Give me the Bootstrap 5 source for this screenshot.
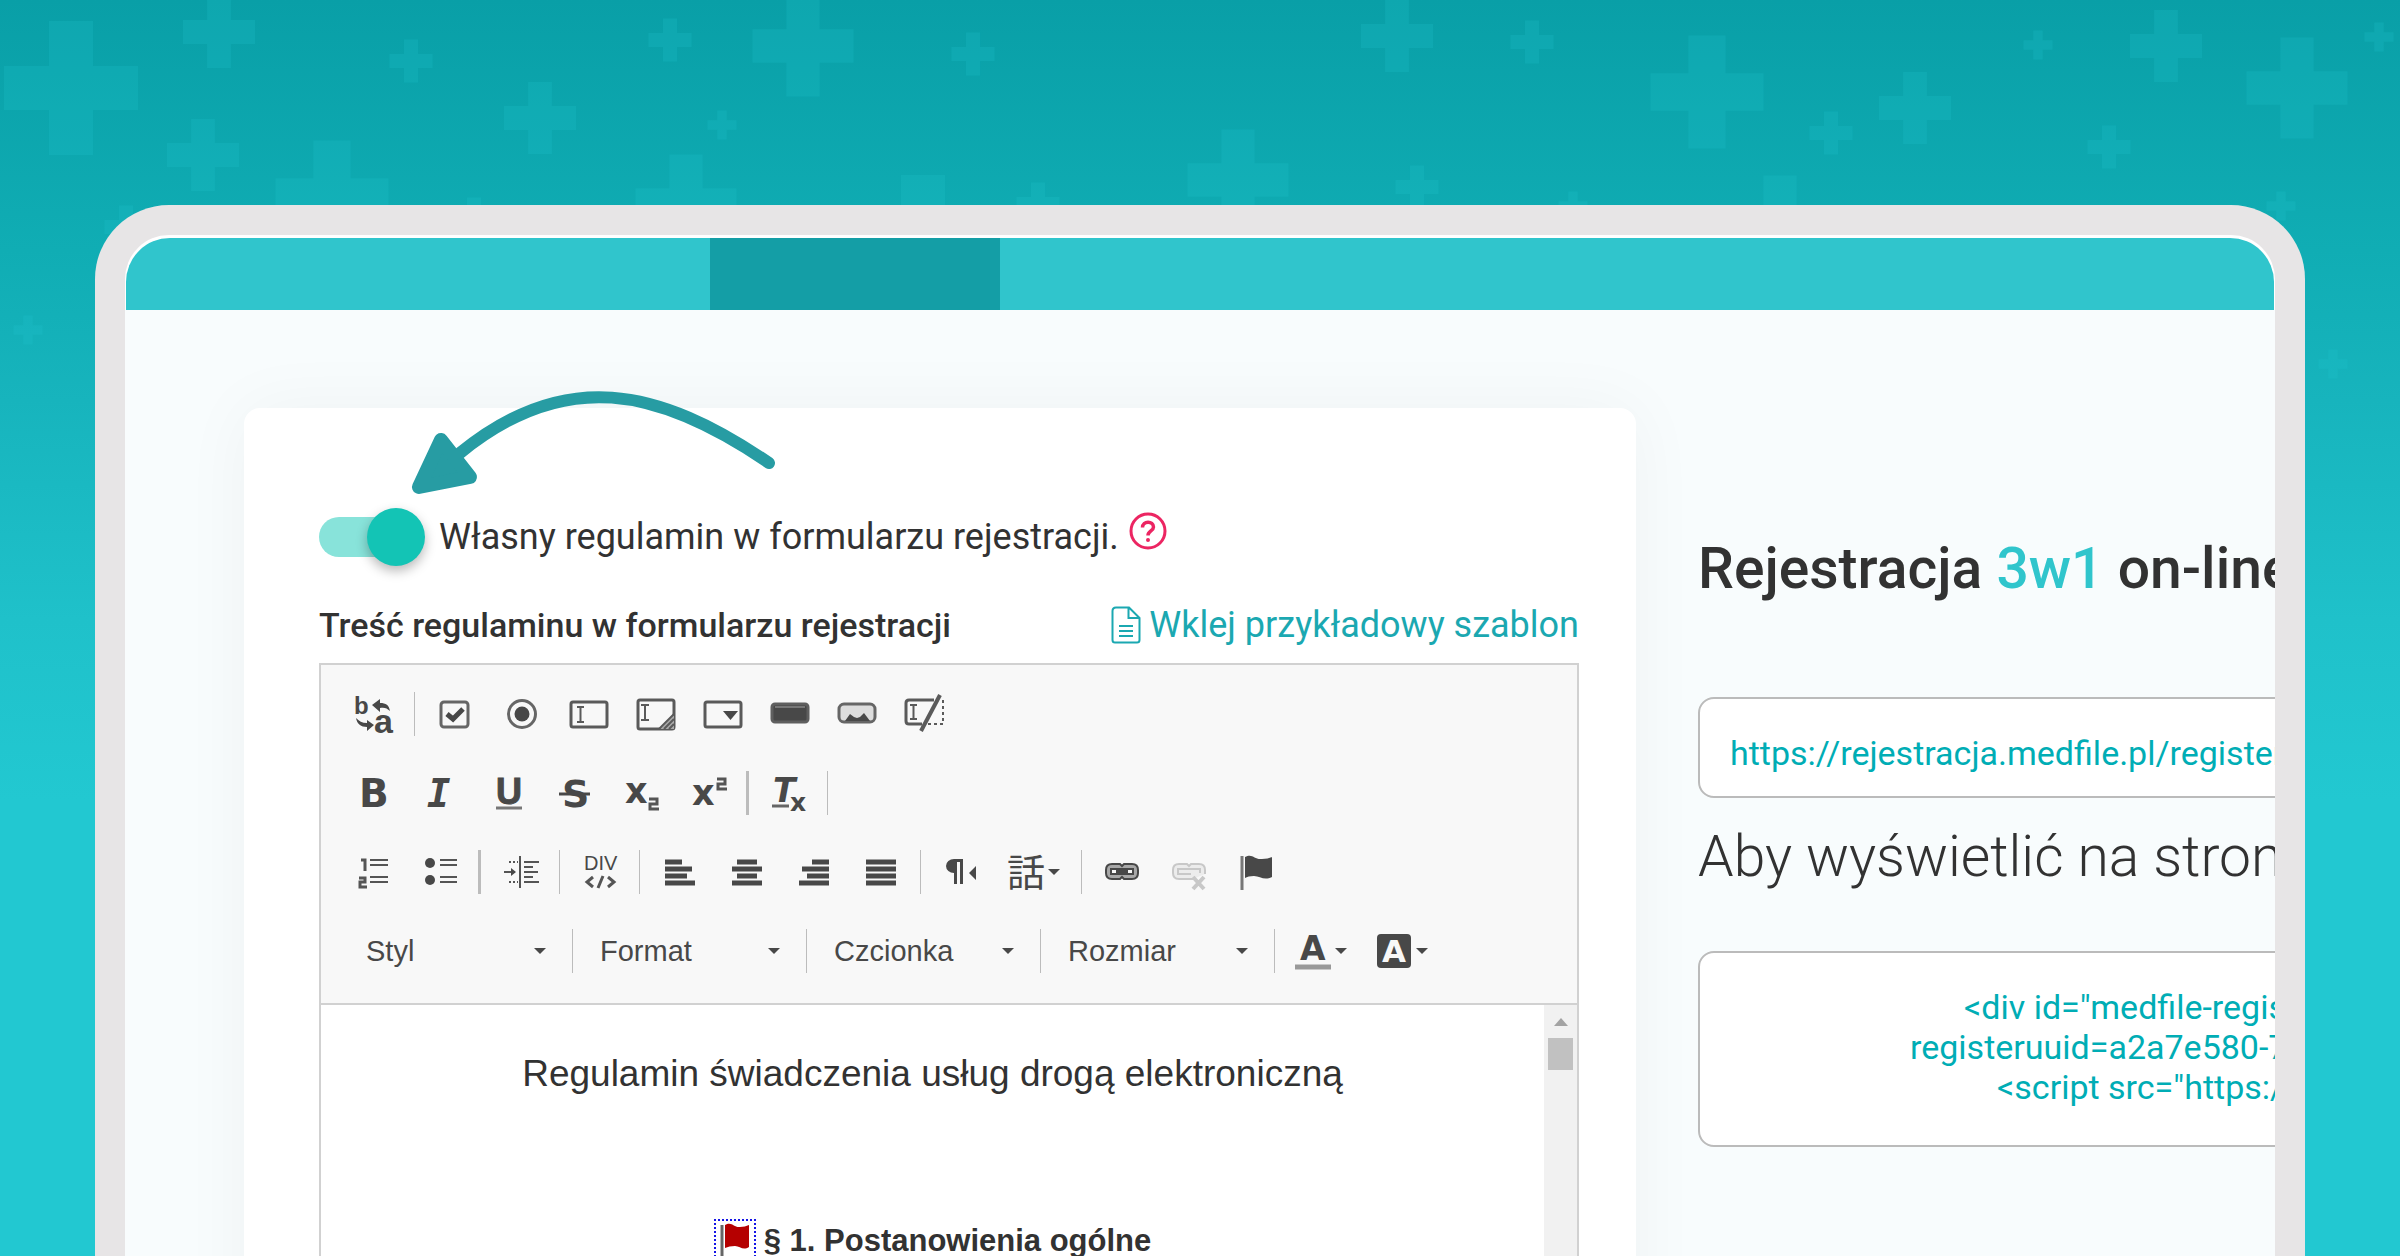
<!DOCTYPE html>
<html lang="pl">
<head>
<meta charset="utf-8">
<meta name="viewport" content="width=device-width, initial-scale=1">
<title>Rejestracja 3w1 on-line</title>
<link href="https://cdn.jsdelivr.net/npm/bootstrap@5.3.0/dist/css/bootstrap.min.css" rel="stylesheet">
<style>
  body { font-family: Roboto, "Liberation Sans", sans-serif; color: #323232; }
  .scene { padding: 205px 95px 0; background: linear-gradient(#099fa7 0, #10adb4 250px, #17b4bd 400px, #1fc1ca 620px, #22c8d1 800px); }
  .plus-pattern { left: 0; top: 0; width: 100%; pointer-events: none; fill: #22c8d0; fill-opacity: .2; }
  .device { border: 30px solid #e7e5e6; border-bottom: 0; border-radius: 74px 74px 0 0; background: #fff; padding: 3px 1px 0; }
  .topbar { height: 72px; background: #30c5cc; border-radius: 44px 44px 0 0; padding-left: 584px; }
  .topbar-active { width: 290px; background: #149ea6; }
  .screen { margin: 0 -1px; padding: 98px 0 0 119px; gap: 62px; background: #f8fcfd; }
  .panel { border: 0; border-radius: 16px; padding: 100px 57px 0 75px; box-shadow: 0 0 70px rgba(0, 40, 50, .045); }
  .hint-arrow { left: 160px; top: -28px; }
  .switch-row { height: 58px; gap: 14px; font-size: 36px; }
  .toggle { appearance: none; position: relative; width: 106px; height: 40px; margin: 0; border-radius: 20px; background: linear-gradient(90deg, #88e3da 80px, transparent 80px); }
  .toggle::before { content: ""; position: absolute; right: 0; top: -9px; width: 58px; height: 58px; border-radius: 50%; background: #13c4b5; box-shadow: 0 5px 12px rgba(0, 0, 0, .28); }
  .help { margin: 0 0 12px -4px; line-height: 0; }
  .title-row { height: 40px; margin: 39px 0 18px; font-size: 36px; line-height: 40px; white-space: nowrap; }
  .title-text { font-size: 34px; font-weight: 500; }
  .title-row a { color: #1ba8b1; gap: 8px; }
  .editor { border: 2px solid #d1d1d1; border-bottom: 0; background: #fff; }
  .tools { padding: 27px 18px 30px; gap: 35px; background: #f8f8f8; border-bottom: 2px solid #d1d1d1; }
  .tool-line { height: 44px; }
  .tool-combos { padding-left: 6px; }
  .tool { flex: none; width: 67px; height: 44px; padding: 0; border: 0; background: none; display: flex; align-items: center; justify-content: center; color: #484848; }
  .tool svg { display: block; flex: none; overflow: visible; }
  .pole { display: block; }
  .tool-wide { width: 69px; }
  .tool-menu { width: 81px; justify-content: flex-start; padding-left: 12px; gap: 2px; }
  .split { flex: none; width: 1px; height: 44px; margin: 0 6px; background: #bcbcbc; }
  .split-bold { width: 3px; margin: 0 5px; }
  .tool-line text { font-family: "Liberation Sans", sans-serif; font-weight: 700; fill: #484848; }
  .tool-line text.heavy { font-family: "DejaVu Sans", sans-serif; }
  .tool-line text.mono { font-family: "DejaVu Sans Mono", monospace; }
  .tool-line text.cjk { font-family: "Noto Sans CJK JP", sans-serif; font-weight: 400; }
  .tool-line text.thin { font-weight: 400; }
  .tool-line text.knockout { fill: #f8f8f8; }
  .combo { flex: none; appearance: none; width: 221px; height: 44px; border: 0; padding: 0 40px 0 21px; color: #484848; font: 29px "Liberation Sans", sans-serif;
    background: transparent url("data:image/svg+xml,%3Csvg xmlns='http://www.w3.org/2000/svg' viewBox='0 0 12 6'%3E%3Cpath d='M0 0h12L6 6z' fill='%23484848'/%3E%3C/svg%3E") no-repeat right 20px center / 12px 6px; }
  .doc { padding-top: 47px; font-family: "Liberation Sans", sans-serif; }
  .doc-title { font-size: 37px; line-height: 44px; margin: 0 0 123px; }
  .doc-section { font-size: 31px; line-height: 44px; gap: 8px; margin: 0 0 80px; }
  .anchor-mark { width: 42px; height: 42px; border: 2px dotted #1414e6; }
  .scroller { width: 33px; background: #f1f1f1; gap: 12px; padding-top: 13px; }
  .scroller-thumb { width: 25px; height: 32px; background: #c1c1c1; }
  .side { flex: 0 0 577px; min-width: 0; padding-top: 129px; }
  .side h1, .side h2 { font-size: 57px; line-height: 64px; white-space: nowrap; }
  .side h1 { font-weight: 500; margin: 0 0 96px; }
  .side h2 { font-weight: 300; margin: 27px 0 62px; }
  .aqua { color: #30c5cc; }
  .field { display: block; width: 900px; border: 2px solid #bbb; border-radius: 16px; background: #fff; color: #00adb5; font-size: 34px; line-height: 40px; }
  .field-url { height: 101px; padding: 10px 30px 0; }
  .field-code { height: 196px; padding: 34px 0 0 210px; white-space: pre; font-family: inherit; }
  .line-a { padding-left: 54px; }
  .line-b { padding-left: 87px; }
</style>
<script src="https://cdn.jsdelivr.net/npm/bootstrap@5.3.0/dist/js/bootstrap.bundle.min.js"></script>
</head>
<body>
<div class="scene vh-100 overflow-hidden position-relative d-flex flex-column">
  <svg class="plus-pattern position-absolute" viewBox="0 0 2400 400" aria-hidden="true">
    <defs><path id="p" d="M-.165-.5h.33v.335H.5v.33H.165V.5h-.33V.165H-.5v-.33h.335z"/></defs>
    <use href="#p" transform="translate(71 88) scale(134)"/><use href="#p" transform="translate(923 242) scale(134)"/>
    <use href="#p" transform="translate(332 197) scale(113)"/><use href="#p" transform="translate(1707 92) scale(113)"/>
    <use href="#p" transform="translate(803 46) scale(101)"/><use href="#p" transform="translate(686 205) scale(101)"/>
    <use href="#p" transform="translate(1238 180) scale(101)"/><use href="#p" transform="translate(2297 88) scale(101)"/>
    <use href="#p" transform="translate(1780 226) scale(101)"/>
    <use href="#p" transform="translate(219 32) scale(72)"/><use href="#p" transform="translate(540 118) scale(72)"/>
    <use href="#p" transform="translate(203 155) scale(72)"/><use href="#p" transform="translate(1397 36) scale(72)"/>
    <use href="#p" transform="translate(1915 108) scale(72)"/><use href="#p" transform="translate(2166 46) scale(72)"/>
    <use href="#p" transform="translate(411 61) scale(43)"/><use href="#p" transform="translate(670 40) scale(43)"/>
    <use href="#p" transform="translate(973 54) scale(43)"/><use href="#p" transform="translate(474 219) scale(43)"/>
    <use href="#p" transform="translate(1038 204) scale(43)"/><use href="#p" transform="translate(126 227) scale(43)"/>
    <use href="#p" transform="translate(1532 42) scale(43)"/><use href="#p" transform="translate(1831 133) scale(43)"/>
    <use href="#p" transform="translate(2109 147) scale(43)"/><use href="#p" transform="translate(1417 187) scale(43)"/>
    <use href="#p" transform="translate(722 125) scale(29)"/><use href="#p" transform="translate(28 330) scale(29)"/>
    <use href="#p" transform="translate(2038 45) scale(29)"/><use href="#p" transform="translate(2379 37) scale(29)"/>
    <use href="#p" transform="translate(1573 206) scale(29)"/><use href="#p" transform="translate(2281 206) scale(29)"/>
    <use href="#p" transform="translate(2333 364) scale(29)"/>
  </svg>

  <div class="device flex-grow-1 overflow-hidden position-relative d-flex flex-column">
    <header class="topbar d-flex flex-shrink-0 overflow-hidden"><div class="topbar-active"></div></header>

    <main class="screen d-flex flex-grow-1">
      <section class="panel card flex-grow-1">
        <svg class="hint-arrow position-absolute" width="380" height="120" viewBox="0 0 380 120" aria-hidden="true">
          <path d="M365 83C254 7 160-12 56 73" fill="none" stroke="#279ca3" stroke-width="12" stroke-linecap="round"/>
          <path d="M37 60L15 107L66 97Z" fill="#279ca3" stroke="#279ca3" stroke-width="14" stroke-linejoin="round"/>
        </svg>

        <div class="switch-row d-flex align-items-center">
          <input class="toggle flex-shrink-0" type="checkbox" role="switch" id="ownRules" checked>
          <label for="ownRules">Własny regulamin w formularzu rejestracji.</label>
          <a class="help" href="#" aria-label="Pomoc">
            <svg width="38" height="38" viewBox="0 0 38 38" fill="none" stroke="#ec2562" stroke-width="3"><circle cx="19" cy="19" r="17"/><path d="M13.500 15.500c0-7 11-7 11-.5 0 4-5.500 4-5.500 8.500" stroke-width="3.500"/><circle cx="19" cy="28" r="1" fill="#ec2562" stroke-width="2"/></svg>
          </a>
        </div>

        <div class="title-row d-flex justify-content-between">
          <span class="title-text">Treść regulaminu w formularzu rejestracji</span>
          <a href="#" class="text-decoration-none d-flex align-items-center">
            <svg width="30" height="38" viewBox="0 0 30 38" fill="none" stroke="#1ba8b1" stroke-width="2"><path d="M5 1.500h13L28.500 12v22q0 2.500-2.500 2.500H4q-2.500 0-2.500-2.500V5Q1.500 1.500 5 1.500zM17.500 1.500V12h11M8 20h14M8 25h14M8 30h14"/></svg>
            <span>Wklej przykładowy szablon</span>
          </a>
        </div>

        <div class="editor">
          <div class="tools d-flex flex-column" role="toolbar" aria-label="Edytor">
            <div class="tool-line d-flex">
              <button class="tool tool-wide" type="button" aria-label="Zamień"><svg width="40" height="40"><text x="0" y="20" font-size="24">b</text><text x="20" y="39" font-size="34">a</text><path d="M18 11l8-6v4c6 0 9 2 10 8-3-3-6-4-10-3v4zM20 31l-7-5v3c-5 0-8-2-11-5 1 6 5 9 11 9v4z" fill="#484848"/></svg></button>
              <i class="split"></i>
              <button class="tool" type="button" aria-label="Pole wyboru"><svg width="40" height="40" fill="none" stroke="#666" stroke-width="3"><rect x="6" y="8" width="27" height="25" rx="3"/><path d="M12 20l6 5 10-10" stroke="#484848" stroke-width="5"/></svg></button>
              <button class="tool" type="button" aria-label="Przycisk opcji"><svg width="40" height="40"><circle cx="20" cy="20" r="13.500" fill="none" stroke="#666" stroke-width="3"/><circle cx="20" cy="20" r="7.500" fill="#484848"/></svg></button>
              <button class="tool" type="button" aria-label="Pole tekstowe"><svg width="40" height="40" fill="none" stroke="#5a5a5a" stroke-width="3"><rect x="2" y="8" width="36" height="25" rx="2"/><path d="M8 13h7M8 28h7M11.500 13v15" stroke-width="2"/></svg></button>
              <button class="tool" type="button" aria-label="Obszar tekstowy"><svg width="40" height="40" fill="none" stroke="#5a5a5a" stroke-width="3"><rect x="2" y="6" width="36" height="29" rx="2"/><path d="M5 11h8M5 26h8M9 11v15" stroke-width="2"/><path d="M24 35l14-14v14z" fill="#aaa" stroke="none"/><path d="M23 35l15-15M28 35l10-10M33 35l5-5" stroke-width="2"/></svg></button>
              <button class="tool" type="button" aria-label="Lista wyboru"><svg width="40" height="40"><rect x="2" y="8" width="36" height="25" rx="2" fill="none" stroke="#5a5a5a" stroke-width="3"/><path d="M20 17h15l-7.500 9z" fill="#484848"/></svg></button>
              <button class="tool" type="button" aria-label="Przycisk"><svg width="40" height="40"><rect x="2" y="10" width="36" height="18" rx="3" fill="#484848" stroke="#5f5f5f" stroke-width="3"/><path d="M5 13h30" stroke="#777" stroke-width="2"/></svg></button>
              <button class="tool" type="button" aria-label="Przycisk graficzny"><svg width="40" height="40"><rect x="2" y="10" width="36" height="18" rx="5" fill="#ddd" stroke="#666" stroke-width="3"/><path d="M8 27l5-7 4 3 3 1 3-1 4-4 6 8z" fill="#484848"/></svg></button>
              <button class="tool" type="button" aria-label="Pole ukryte"><svg width="40" height="40" fill="none" stroke="#5a5a5a" stroke-width="3"><path d="M30 6H5q-3 0-3 3v18q0 3 3 3h13"/><path d="M6 11h7M6 25h7M9.500 11v14" stroke-width="2"/><path d="M36 1L17 37" stroke-width="4"/><path d="M39 6v24M24 30h15" stroke-width="2" stroke-dasharray="3 3"/></svg></button>
            </div>
            <div class="tool-line d-flex">
              <button class="tool" type="button" aria-label="Pogrubienie"><svg width="40" height="40"><text class="heavy" x="6" y="34" font-size="39">B</text></svg></button>
              <button class="tool" type="button" aria-label="Kursywa"><svg width="40" height="40"><text class="mono" x="7" y="34" font-size="39" font-style="italic">I</text></svg></button>
              <button class="tool" type="button" aria-label="Podkreślenie"><svg width="40" height="40"><text x="9" y="31" font-size="36" stroke="#484848">U</text><path d="M9 35h26" stroke="#777" stroke-width="3"/></svg></button>
              <button class="tool" type="button" aria-label="Przekreślenie"><svg width="40" height="40"><text class="heavy" x="8" y="34" font-size="38">S</text><path d="M5 21h31" stroke="#484848" stroke-width="3"/></svg></button>
              <button class="tool" type="button" aria-label="Indeks dolny"><svg width="40" height="40"><text class="heavy" x="4" y="30" font-size="35">x</text><path d="M28 26h8v5h-7v5h9" fill="none" stroke="#555" stroke-width="3"/></svg></button>
              <button class="tool" type="button" aria-label="Indeks górny"><svg width="40" height="40"><text class="heavy" x="4" y="32" font-size="35">x</text><path d="M29 6h8v5h-7v5h9" fill="none" stroke="#555" stroke-width="3"/></svg></button>
              <i class="split split-bold"></i>
              <button class="tool" type="button" aria-label="Usuń formatowanie"><svg width="40" height="40"><text class="heavy" x="5" y="29" font-size="33" font-style="italic">T</text><path d="M4 33h17" stroke="#666" stroke-width="3"/><text class="heavy" x="22" y="38" font-size="25">x</text></svg></button>
              <i class="split"></i>
            </div>
            <div class="tool-line d-flex">
              <button class="tool" type="button" aria-label="Lista numerowana"><svg width="40" height="40" fill="none" stroke="#555" stroke-width="2"><path d="M17 8h18M17 13h18M17 25h18M17 30h18"/><path d="M8 8h4v11M6 26h6v4H7v5h7" stroke-width="3"/></svg></button>
              <button class="tool" type="button" aria-label="Lista punktowana"><svg width="40" height="40" stroke="#555" stroke-width="2"><path d="M20 8h17M20 13h17M20 25h17M20 30h17"/><g fill="#484848" stroke="none"><circle cx="10" cy="11" r="5"/><circle cx="10" cy="28" r="5"/></g></svg></button>
              <i class="split split-bold"></i>
              <button class="tool" type="button" aria-label="Wcięcie"><svg width="40" height="40" stroke="#555" stroke-width="2"><path d="M20 4v32M4 20h11M24 10h15M24 15h9M24 20h14M24 25h9M24 30h15"/><path d="M11 16l5 4-5 4z" fill="#484848" stroke="none"/><path d="M9 10h9M9 30h9" stroke-dasharray="2 2"/></svg></button>
              <i class="split"></i>
              <button class="tool" type="button" aria-label="Kontener DIV"><svg width="40" height="40"><text class="thin" x="4" y="18" font-size="20">DIV</text><path d="M13 25l-6 5 6 5M28 25l6 5-6 5M23 24l-5 12" fill="none" stroke="#555" stroke-width="3"/></svg></button>
              <i class="split"></i>
              <button class="tool" type="button" aria-label="Do lewej"><svg width="40" height="40" stroke="#484848" stroke-width="5"><path d="M5 10h17M5 17h27M5 24h22M5 31h30"/></svg></button>
              <button class="tool" type="button" aria-label="Wyśrodkuj"><svg width="40" height="40" stroke="#484848" stroke-width="5"><path d="M10 10h20M5 17h30M10 24h20M5 31h30"/></svg></button>
              <button class="tool" type="button" aria-label="Do prawej"><svg width="40" height="40" stroke="#484848" stroke-width="5"><path d="M18 10h17M8 17h27M13 24h22M5 31h30"/></svg></button>
              <button class="tool" type="button" aria-label="Wyjustuj"><svg width="40" height="40" stroke="#484848" stroke-width="5"><path d="M5 10h30M5 17h30M5 24h30M5 31h30"/></svg></button>
              <i class="split"></i>
              <button class="tool" type="button" aria-label="Kierunek tekstu"><svg width="40" height="40" fill="#484848"><path d="M22 7h-9a8 7 0 0 0 0 14v11h3V10h3v22h3V10zM35 14v14l-7-7z"/></svg></button>
              <button class="tool tool-menu" type="button" aria-label="Język"><svg width="40" height="40"><text class="cjk" x="1" y="34" font-size="38">話</text></svg><svg width="12" height="6"><path d="M0 0h12L6 6z" fill="#484848"/></svg></button>
              <i class="split"></i>
              <button class="tool" type="button" aria-label="Odnośnik"><svg width="40" height="40" fill="none" stroke="#484848" stroke-width="2"><path d="M18 12h-8q-6 0-6 6v3q0 6 6 6h8l2-2 2 2h8q6 0 6-6v-3q0-6-6-6h-8l-2 2z" fill="#a8a8a8"/><rect x="9" y="17" width="22" height="5" fill="#f8f8f8"/><path d="M14 19.500h12" stroke-width="3"/></svg></button>
              <button class="tool" type="button" aria-label="Usuń odnośnik"><svg width="40" height="40" fill="none" stroke="#c8c8c8" stroke-width="2"><path d="M24 27h-4l-2 0h-8q-6 0-6-6v-3q0-6 6-6h8l2 2 2-2h8q6 0 6 6v4M22 22H9v-5h22v4" fill="#ececec"/><path d="M24 25l11 12M35 25L24 37" stroke-width="4"/></svg></button>
              <button class="tool" type="button" aria-label="Kotwica"><svg width="40" height="40"><path d="M6 4v34" stroke="#777" stroke-width="3"/><path d="M9 5c8-4 9 3 17 2q6 0 10-2v20c-8 4-12-1-18-1q-6 0-9 2z" fill="#484848"/></svg></button>
            </div>
            <div class="tool-line tool-combos d-flex">
              <select class="combo" aria-label="Styl"><option>Styl</option></select><i class="split"></i>
              <select class="combo" aria-label="Format"><option>Format</option></select><i class="split"></i>
              <select class="combo" aria-label="Czcionka"><option>Czcionka</option></select><i class="split"></i>
              <select class="combo" aria-label="Rozmiar"><option>Rozmiar</option></select><i class="split"></i>
              <button class="tool tool-menu" type="button" aria-label="Kolor tekstu"><svg width="40" height="40"><text class="heavy" x="7" y="29" font-size="33">A</text><path d="M2 36h36" stroke="#999" stroke-width="5"/></svg><svg width="12" height="6"><path d="M0 0h12L6 6z" fill="#484848"/></svg></button>
              <button class="tool tool-menu" type="button" aria-label="Kolor tła"><svg width="40" height="40"><rect x="3" y="3" width="34" height="34" rx="4" fill="#484848"/><text class="heavy knockout" x="8" y="31" font-size="31">A</text></svg><svg width="12" height="6"><path d="M0 0h12L6 6z" fill="#484848"/></svg></button>
            </div>
          </div>

          <div class="d-flex">
            <article class="doc flex-grow-1 text-center">
              <p class="doc-title">Regulamin świadczenia usług drogą elektroniczną</p>
              <p class="doc-section d-flex justify-content-center fw-bold"><span class="anchor-mark"><svg class="pole" width="38" height="38"><path d="M6 4v32" stroke="#666" stroke-width="3"/><path d="M9 4c7-4 9 3 15 2q5 0 9-2v22c-6 4-9-1-14-1q-6 0-10 2z" fill="#b50000"/></svg></span><span>§ 1. Postanowienia ogólne</span></p>
            </article>
            <div class="scroller d-flex flex-column align-items-center">
              <svg width="14" height="8"><path d="M7 0l7 8H0z" fill="#a3a3a3"/></svg>
              <div class="scroller-thumb"></div>
            </div>
          </div>
        </div>
      </section>

      <aside class="side">
        <h1>Rejestracja <span class="aqua">3w1</span> on-line</h1>
        <input class="field field-url" type="text" readonly aria-label="Adres rejestracji" value="https://rejestracja.medfile.pl/register">
        <h2>Aby wyświetlić na stronie</h2>
        <code class="field field-code"><span class="line-a">&lt;div id="medfile-regis</span>
<span>registeruuid=a2a7e580-7</span>
<span class="line-b">&lt;script src="https:/</span></code>
      </aside>
    </main>
  </div>
</div>
</body>
</html>
